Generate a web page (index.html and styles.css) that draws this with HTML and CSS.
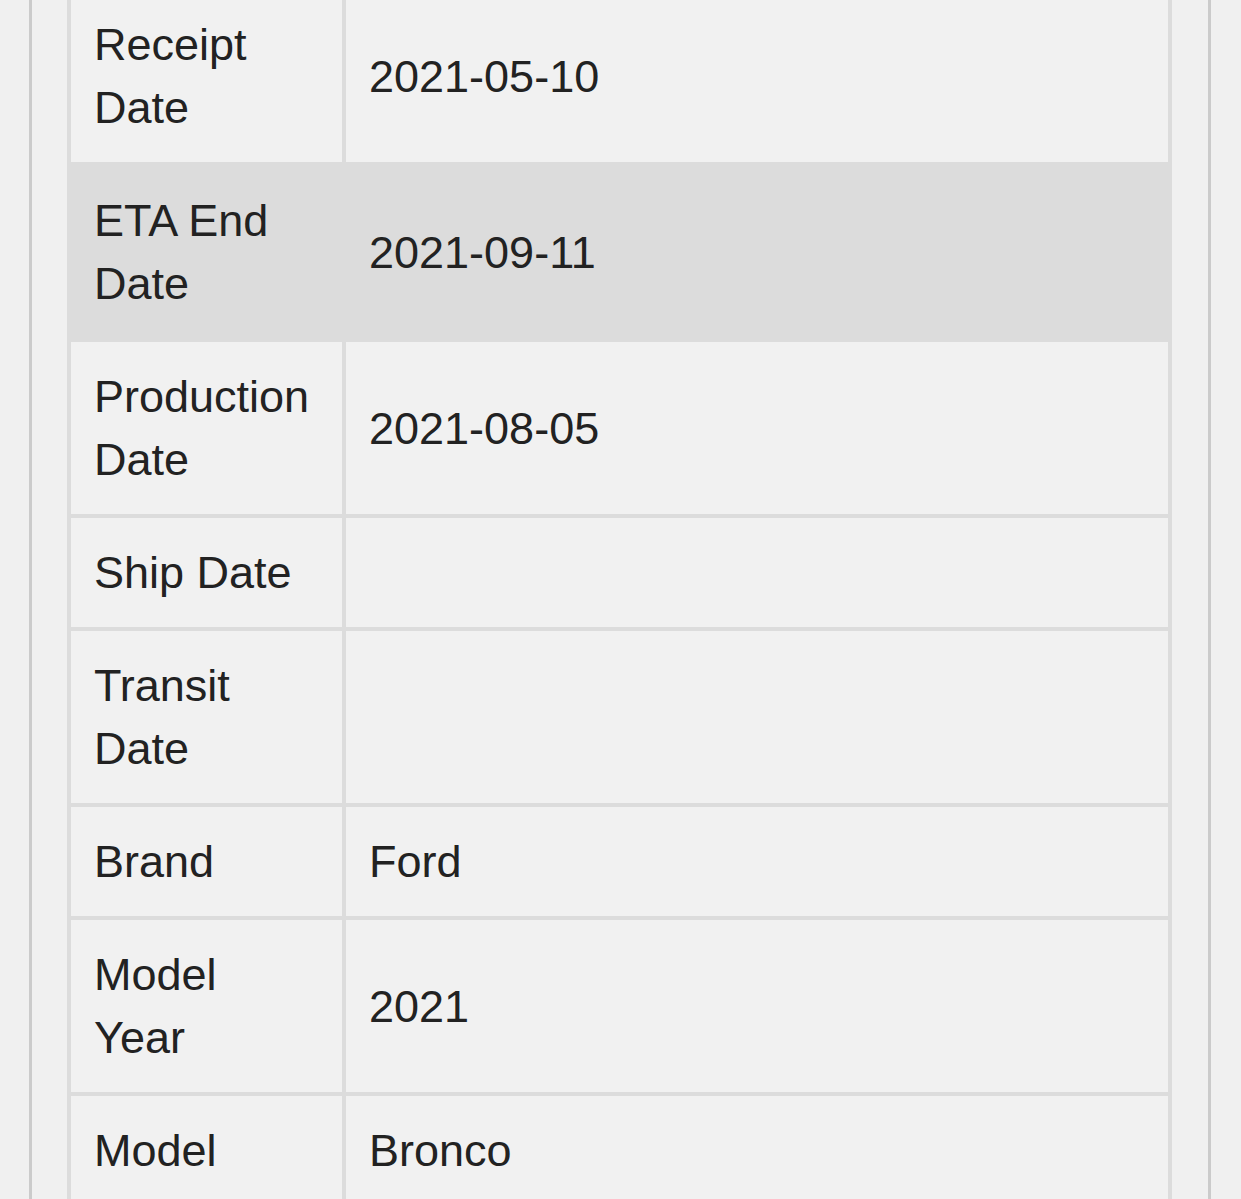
FILE: index.html
```html
<!DOCTYPE html>
<html lang="en">
<head>
  <meta charset="UTF-8" />
  <title>Vehicle Details</title>
  <link rel="stylesheet" href="styles.css">
</head>
<body>
  <div class="panel">
    <table class="details">
      <colgroup>
        <col class="label-col">
        <col>
      </colgroup>
      <tbody>
        <tr>
          <th>Receipt Date</th>
          <td>2021-05-10</td>
        </tr>
        <tr class="active">
          <th>ETA End Date</th>
          <td>2021-09-11</td>
        </tr>
        <tr>
          <th>Production Date</th>
          <td>2021-08-05</td>
        </tr>
        <tr>
          <th>Ship Date</th>
          <td></td>
        </tr>
        <tr>
          <th>Transit Date</th>
          <td></td>
        </tr>
        <tr>
          <th>Brand</th>
          <td>Ford</td>
        </tr>
        <tr>
          <th>Model Year</th>
          <td>2021</td>
        </tr>
        <tr>
          <th>Model</th>
          <td>Bronco</td>
        </tr>
      </tbody>
    </table>
  </div>
</body>
</html>
```

FILE: styles.css
```css
body {
  margin: 0;
  background-color: #f0f0f0;
  font-family: "Liberation Sans", Arial, sans-serif;
  color: #222;
  overflow: hidden;
}

.panel {
  margin: -14px 30px 0 29px;
  padding: 0 36px 0 35px;
  border-left: 3px solid #cbcbcb;
  border-right: 3px solid #cbcbcb;
  min-height: 1300px;
}

.details {
  width: 100%;
  table-layout: fixed;
  border-collapse: separate;
  border-spacing: 4px;
  background-color: #dcdcdc;
}

.details .label-col {
  width: 271px;
}

.details th,
.details td {
  background-color: #f1f1f1;
  padding: 23px;
  font-size: 45px;
  line-height: 63px;
  font-weight: normal;
  text-align: left;
  vertical-align: middle;
}

.details tr.active th,
.details tr.active td {
  background-color: #dcdcdc;
}
```
